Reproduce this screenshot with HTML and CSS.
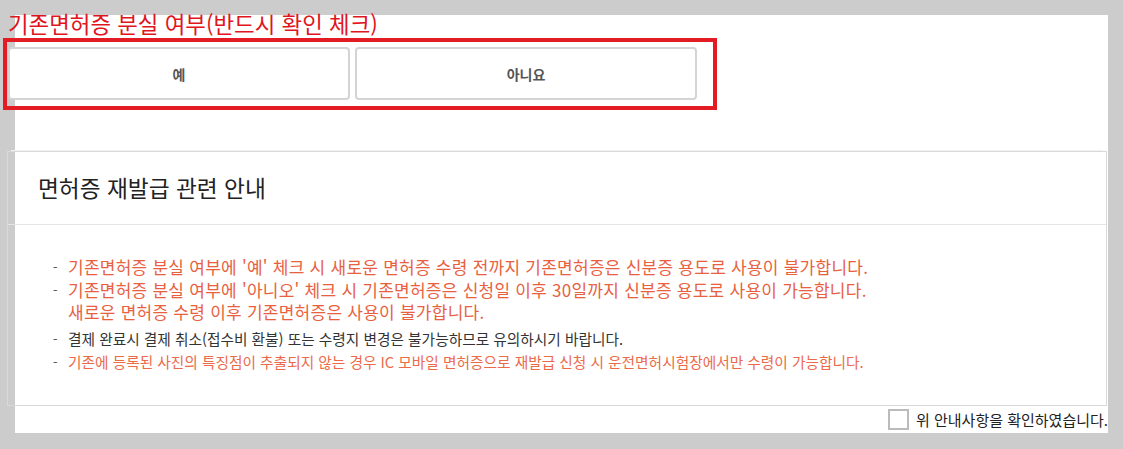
FILE: index.html
```html
<!DOCTYPE html>
<html lang="ko">
<head>
    <meta charset="UTF-8">
    <meta name="viewport" content="width=device-width, initial-scale=1.0">
    <title>면허증 재발급</title>
    <link rel="stylesheet" href="styles.css">
</head>
<body>
    <div class="page">
        <h2 class="lost-title">기존면허증 분실 여부(반드시 확인 체크)</h2>
        <div class="choice-box">
            <button class="choice-btn">예</button>
            <button class="choice-btn">아니요</button>
        </div>

        <div class="notice">
            <div class="notice-head">면허증 재발급 관련 안내</div>
            <ul class="notice-list">
                <li class="big">기존면허증 분실 여부에 '예' 체크 시 새로운 면허증 수령 전까지 기존면허증은 신분증 용도로 사용이 불가합니다.</li>
                <li class="big">기존면허증 분실 여부에 '아니오' 체크 시 기존면허증은 신청일 이후 30일까지 신분증 용도로 사용이 가능합니다.<br>새로운 면허증 수령 이후 기존면허증은 사용이 불가합니다.</li>
                <li class="dark">결제 완료시 결제 취소(접수비 환불) 또는 수령지 변경은 불가능하므로 유의하시기 바랍니다.</li>
                <li class="warn">기존에 등록된 사진의 특징점이 추출되지 않는 경우 IC 모바일 면허증으로 재발급 신청 시 운전면허시험장에서만 수령이 가능합니다.</li>
            </ul>
        </div>

        <label class="agree">
            <span class="check"></span>
            위 안내사항을 확인하였습니다.
        </label>
    </div>
</body>
</html>
```

FILE: styles.css
```css
body {
    margin: 0;
    padding: 15px;
    background-color: #cccccc;
    font-family: "Noto Sans CJK KR", "Noto Sans", sans-serif;
}
.page {
    display: flow-root;
    width: 1093px;
    height: 418px;
    background-color: #fff;
}
.lost-title {
    margin: -5px 0 0 -7px;
    font-size: 22.4px;
    font-weight: normal;
    line-height: 26px;
    color: #e0151d;
}
.choice-box {
    display: flex;
    gap: 5px;
    width: 705px;
    height: 59px;
    margin: 2px 0 0 -12px;
    padding: 5px 0 0 1px;
    border: 4px solid #e31c24;
}
.choice-btn {
    width: 342px;
    height: 53px;
    background-color: #fff;
    border: 2px solid #d4d4d4;
    border-radius: 4px;
    font-family: inherit;
    font-size: 14px;
    font-weight: bold;
    color: #555;
}
.notice {
    margin: 41px 0 0 -8px;
    width: 1098px;
    border: 1px solid #d9d9d9;
    box-shadow: 0 -5px 0 -4px #f2f2f2;
}
.notice-head {
    height: 72px;
    padding-left: 30px;
    line-height: 72px;
    font-size: 22.7px;
    color: #222;
    border-bottom: 1px solid #e4e4e4;
}
.notice-list {
    list-style: none;
    margin: 0;
    padding: 31px 0 32px 45px;
}
.notice-list li {
    position: relative;
    padding-left: 15px;
}
.notice-list li::before {
    content: "-";
    position: absolute;
    left: 0;
    color: #555;
    font-size: 13px;
}
.big {
    font-size: 17px;
    line-height: 22.5px;
    letter-spacing: 0.25px;
    color: #e8613f;
}
.dark {
    margin-top: 2px;
    font-size: 14.7px;
    line-height: 25px;
    color: #333;
}
.warn {
    font-size: 14.7px;
    line-height: 22px;
    color: #ea6a4a;
}
.agree {
    display: flex;
    align-items: center;
    justify-content: flex-end;
    gap: 7px;
    height: 28px;
    font-size: 15px;
    color: #222;
}
.check {
    width: 17px;
    height: 17px;
    border: 2px solid #bbb;
    background-color: #fff;
}
```
